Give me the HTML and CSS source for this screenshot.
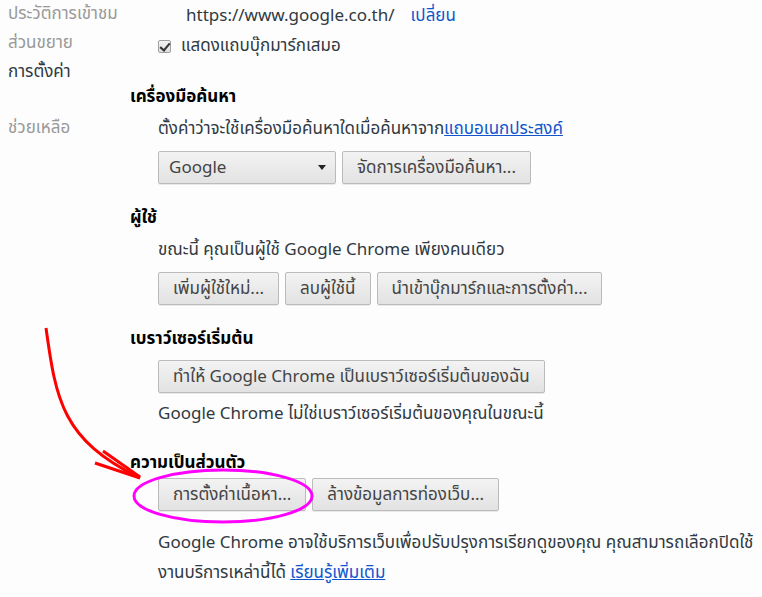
FILE: index.html
```html
<!DOCTYPE html>
<html lang="th">
<head>
    <meta charset="UTF-8">
    <title>การตั้งค่า</title>
    <link rel="stylesheet" href="styles.css">
</head>
<body>
    <div class="page">
        <nav class="sidebar">
            <a class="nav-item">ประวัติการเข้าชม</a>
            <a class="nav-item">ส่วนขยาย</a>
            <a class="nav-item active">การตั้งค่า</a>
            <a class="nav-item help">ช่วยเหลือ</a>
        </nav>

        <main class="settings">
            <div class="homepage-row">
                <span class="url">https://www.google.co.th/</span>
                <a class="link plain">เปลี่ยน</a>
            </div>
            <label class="check-row">
                <span class="checkbox checked"></span>
                แสดงแถบบุ๊กมาร์กเสมอ
            </label>

            <section class="section first">
                <h3>เครื่องมือค้นหา</h3>
                <div class="section-body">
                    <p class="desc">ตั้งค่าว่าจะใช้เครื่องมือค้นหาใดเมื่อค้นหาจาก<a class="link">แถบอเนกประสงค์</a></p>
                    <div class="controls">
                        <div class="select">
                            <span>Google</span>
                            <span class="caret"></span>
                        </div>
                        <button class="btn">จัดการเครื่องมือค้นหา...</button>
                    </div>
                </div>
            </section>

            <section class="section">
                <h3>ผู้ใช้</h3>
                <div class="section-body">
                    <p class="desc">ขณะนี้ คุณเป็นผู้ใช้ Google Chrome เพียงคนเดียว</p>
                    <div class="controls">
                        <button class="btn">เพิ่มผู้ใช้ใหม่...</button>
                        <button class="btn">ลบผู้ใช้นี้</button>
                        <button class="btn">นำเข้าบุ๊กมาร์กและการตั้งค่า...</button>
                    </div>
                </div>
            </section>

            <section class="section">
                <h3>เบราว์เซอร์เริ่มต้น</h3>
                <div class="section-body">
                    <div class="controls tight">
                        <button class="btn">ทำให้ Google Chrome เป็นเบราว์เซอร์เริ่มต้นของฉัน</button>
                    </div>
                    <p class="desc after">Google Chrome ไม่ใช่เบราว์เซอร์เริ่มต้นของคุณในขณะนี้</p>
                </div>
            </section>

            <section class="section privacy">
                <h3>ความเป็นส่วนตัว</h3>
                <div class="section-body">
                    <div class="controls tight">
                        <button class="btn">การตั้งค่าเนื้อหา...</button>
                        <button class="btn">ล้างข้อมูลการท่องเว็บ...</button>
                    </div>
                    <p class="desc after">Google Chrome อาจใช้บริการเว็บเพื่อปรับปรุงการเรียกดูของคุณ คุณสามารถเลือกปิดใช้<br>งานบริการเหล่านี้ได้ <a class="link">เรียนรู้เพิ่มเติม</a></p>
                </div>
            </section>
        </main>
    </div>

    <!-- คำอธิบายประกอบ: ลูกศรและวงรี -->
    <svg class="annotation" width="762" height="597" viewBox="0 0 762 597">
        <path d="M46 328 C56 400 62 440 140 478" fill="none" stroke="#f00" stroke-width="3"/>
        <path d="M103 451 L140 477" fill="none" stroke="#f00" stroke-width="3"/>
        <path d="M95 463 L140 478" fill="none" stroke="#f00" stroke-width="3"/>
        <ellipse cx="223" cy="496" rx="89" ry="26" fill="none" stroke="#f0f" stroke-width="3"/>
    </svg>
</body>
</html>
```

FILE: styles.css
```css
* {
    box-sizing: border-box;
    margin: 0;
    padding: 0;
}

body {
    background: #fcfdfc;
    color: #303942;
    font-family: Tahoma, "Noto Sans Thai", "Liberation Sans", sans-serif;
    font-size: 17px;
    width: 762px;
    height: 597px;
    overflow: hidden;
    position: relative;
}

.page {
    display: flex;
}

/* เมนูด้านซ้าย */
.sidebar {
    width: 130px;
    padding: 0 0 0 8px;
    display: flex;
    flex-direction: column;
}

.nav-item {
    color: #999;
    line-height: 29px;
    height: 29px;
    white-space: nowrap;
}

.nav-item.active {
    color: #303942;
}

.nav-item.help {
    margin-top: 27px;
}

/* ส่วนเนื้อหา */
.settings {
    flex: 1;
    padding-top: 1px;
}

.homepage-row {
    line-height: 30px;
    padding-left: 56px;
    display: flex;
    gap: 16px;
}

.check-row {
    display: flex;
    align-items: center;
    gap: 10px;
    height: 30px;
    padding-left: 28px;
}

.checkbox {
    width: 13px;
    height: 13px;
    border: 1px solid #a0a0a0;
    border-radius: 2px;
    background: linear-gradient(#f4f4f4, #dedede);
    position: relative;
}

.checkbox.checked::after {
    content: '';
    position: absolute;
    left: 3px;
    top: 0;
    width: 4px;
    height: 8px;
    border: solid #333;
    border-width: 0 2px 2px 0;
    transform: rotate(40deg);
}

.link {
    color: #15c;
    text-decoration: underline;
    cursor: pointer;
}

.link.plain {
    text-decoration: none;
}

.section {
    margin-top: 19px;
}

.section.first {
    margin-top: 21px;
}

.section h3 {
    font-size: 17px;
    font-weight: bold;
    color: #000;
    line-height: 30px;
}

.section-body {
    padding-left: 28px;
}

.desc {
    line-height: 30px;
    margin-top: 2px;
    white-space: nowrap;
}

.desc.after {
    margin-top: 6px;
}

.privacy .desc.after {
    margin-top: 17px;
}

.controls {
    display: flex;
    gap: 6px;
    margin-top: 7px;
}

.controls.tight {
    margin-top: 6px;
}

.privacy .controls.tight {
    margin-top: 0;
}

.btn,
.select {
    height: 33px;
    padding: 0 14px;
    font: inherit;
    color: #444;
    background: linear-gradient(#f3f3f3, #e2e2e2);
    border: 1px solid #bbb;
    border-radius: 2px;
    box-shadow: 0 1px 0 rgba(0, 0, 0, 0.08);
    white-space: nowrap;
}

.select {
    width: 178px;
    display: flex;
    align-items: center;
    justify-content: space-between;
    padding: 0 9px 0 10px;
}

.caret {
    width: 0;
    height: 0;
    border-left: 4px solid transparent;
    border-right: 4px solid transparent;
    border-top: 5px solid #222;
}

.annotation {
    position: absolute;
    left: 0;
    top: 0;
    pointer-events: none;
}
```
